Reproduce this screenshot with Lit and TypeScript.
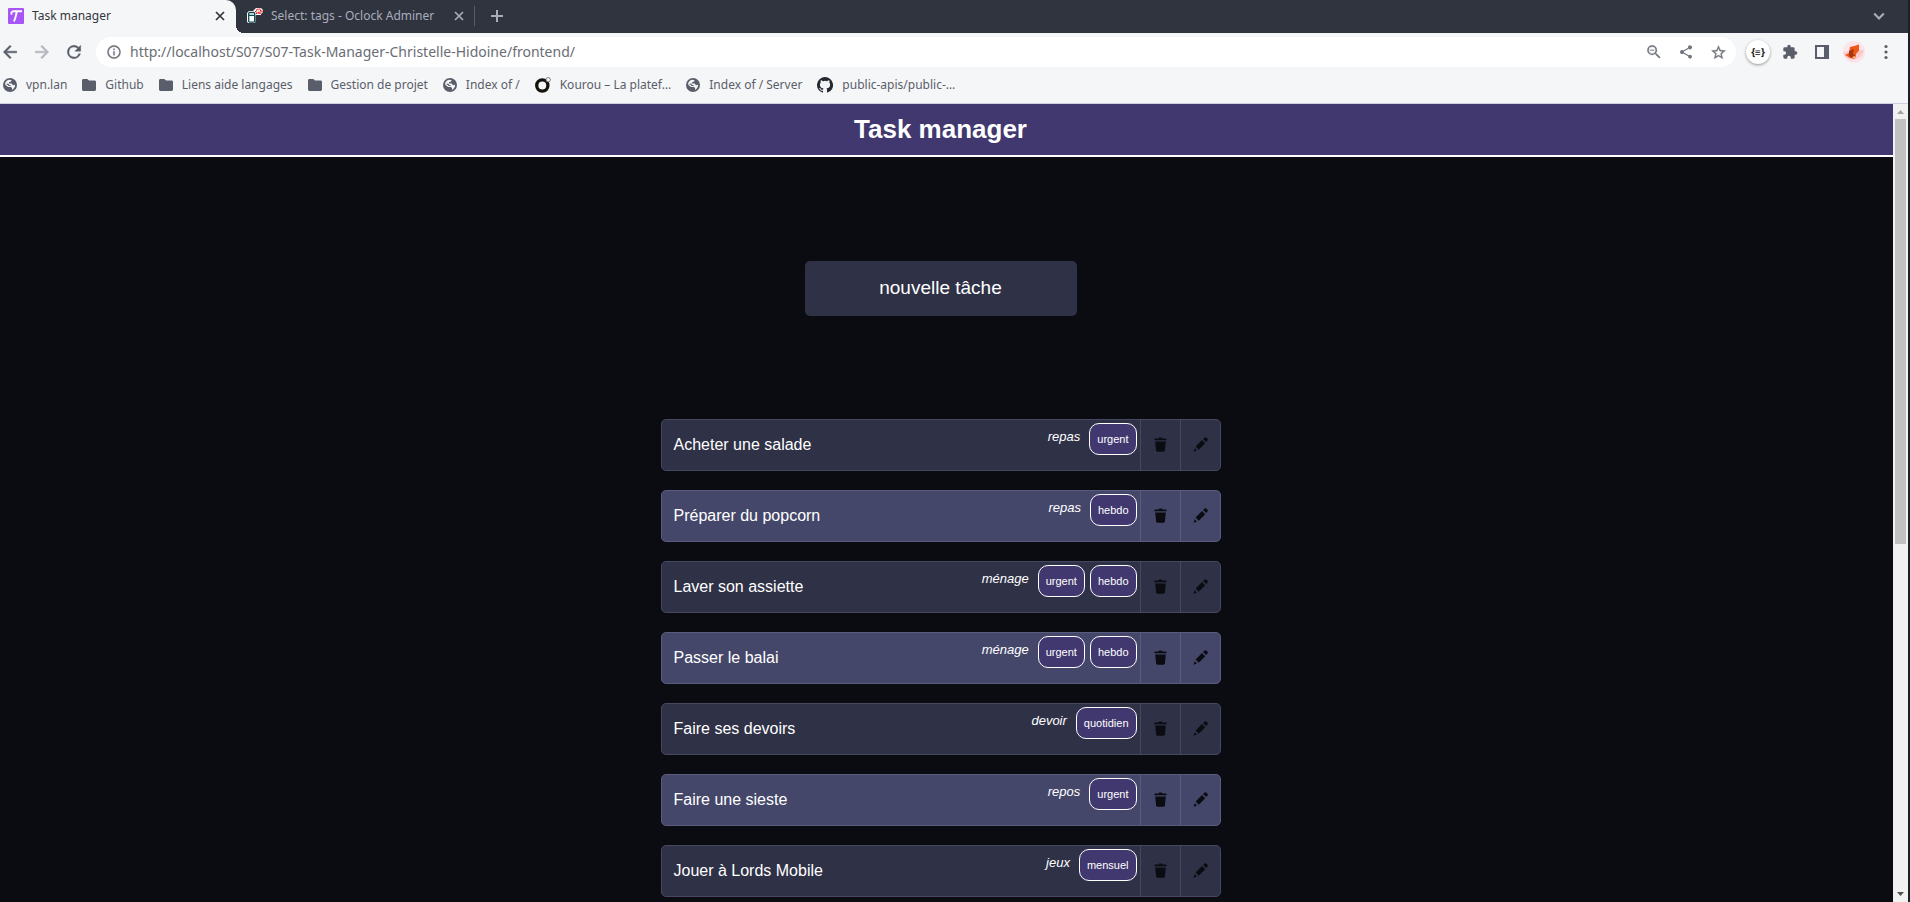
import { LitElement, html, css, svg } from "lit";
import { customElement } from "lit/decorators.js";

interface Task { title: string; category: string; tags: string[]; }

const TASKS: Task[] = [
  { title: "Acheter une salade", category: "repas", tags: ["urgent"] },
  { title: "Préparer du popcorn", category: "repas", tags: ["hebdo"] },
  { title: "Laver son assiette", category: "ménage", tags: ["urgent", "hebdo"] },
  { title: "Passer le balai", category: "ménage", tags: ["urgent", "hebdo"] },
  { title: "Faire ses devoirs", category: "devoir", tags: ["quotidien"] },
  { title: "Faire une sieste", category: "repos", tags: ["urgent"] },
  { title: "Jouer à Lords Mobile", category: "jeux", tags: ["mensuel"] },
];

const icon = (size: number, body: unknown, box = "0 0 24 24") =>
  html`<svg width=${size} height=${size} viewBox=${box} fill="currentColor" aria-hidden="true">${body}</svg>`;

const close = svg`<path d="M1 1l8 8M9 1l-8 8" fill="none" stroke="currentColor" stroke-width="1.7"/>`;
const plus = svg`<path d="M6 0v12M0 6h12" fill="none" stroke="currentColor" stroke-width="2"/>`;
const chevron = svg`<path d="M1 3l4 4 4-4" fill="none" stroke="currentColor" stroke-width="1.8"/>`;
const back = svg`<path d="M20 11H7.83l5.59-5.59L12 4l-8 8 8 8 1.41-1.41L7.83 13H20z" stroke="currentColor" stroke-width=".6"/>`;
const forward = svg`<path d="M12 4l-1.41 1.41L16.17 11H4v2h12.17l-5.58 5.59L12 20l8-8z" stroke="currentColor" stroke-width=".6"/>`;
const reload = svg`<path d="M17.65 6.35A7.96 7.96 0 0 0 12 4a8 8 0 1 0 7.73 10h-2.08A6 6 0 1 1 12 6c1.66 0 3.14.69 4.22 1.78L13 11h7V4z" stroke="currentColor" stroke-width=".5"/>`;
const info = svg`<path d="M11 7h2v2h-2zm0 4h2v6h-2zm1-9a10 10 0 1 0 0 20 10 10 0 0 0 0-20zm0 18a8 8 0 1 1 0-16 8 8 0 0 1 0 16z" stroke="currentColor" stroke-width=".4"/>`;
const zoomOut = svg`<path d="M15.5 14h-.79l-.28-.27A6.47 6.47 0 0 0 16 9.5 6.5 6.5 0 1 0 9.5 16c1.61 0 3.09-.59 4.23-1.57l.27.28v.79l5 4.99L20.49 19zm-6 0a4.5 4.5 0 1 1 0-9 4.5 4.5 0 0 1 0 9zM7 9h5v1H7z" stroke="currentColor" stroke-width=".3"/>`;
const share = svg`<path d="M18 16.08c-.76 0-1.44.3-1.96.77L8.91 12.7a3.3 3.3 0 0 0 0-1.39l7.05-4.11A3 3 0 1 0 15 5c0 .24.04.47.09.7L8.04 9.81a3 3 0 1 0 0 4.38l7.12 4.16a2.92 2.92 0 1 0 2.84-2.27z"/>`;
const star = svg`<path d="M22 9.24l-7.19-.62L12 2 9.19 8.63 2 9.24l5.46 4.73L5.82 21 12 17.27 18.18 21l-1.63-7.03zM12 15.4l-3.76 2.27 1-4.28-3.32-2.88 4.38-.38L12 6.1l1.71 4.04 4.38.38-3.32 2.88 1 4.28z" stroke="currentColor" stroke-width=".4"/>`;
const puzzle = svg`<path d="M20.5 11H19V7a2 2 0 0 0-2-2h-4V3.5a2.5 2.5 0 0 0-5 0V5H4a2 2 0 0 0-2 2v3.8h1.5a2.7 2.7 0 0 1 0 5.4H2V20c0 1.1.9 2 2 2h3.8v-1.5a2.7 2.7 0 0 1 5.4 0V22H17a2 2 0 0 0 2-2v-4h1.5a2.5 2.5 0 0 0 0-5z"/>`;
const panel = svg`<path fill-rule="evenodd" d="M0 0h14v14H0zM2 2v10h7V2z"/>`;
const dots = svg`<circle cx="8" cy="2.5" r="1.6"/><circle cx="8" cy="8" r="1.6"/><circle cx="8" cy="13.5" r="1.6"/>`;
const globe = svg`<circle cx="7" cy="7" r="7"/><path d="M2 6.200C2.300 4 4 2.300 6 1.800l2.600.4-.5 1.400-2 .7v1.300h2.600l1.200 1.700 2.200-.5c.1 2.300-1.200 4.300-3.100 5.100l.1-1.900-1.200-1.100-2.400.2L3.600 8z" fill="#f5f6f7"/><path d="M3.600 6.300l1.500-.2.500 1.100 2 .5" fill="none" stroke="currentColor" stroke-width="1.100"/>`;
const folder = svg`<path d="M0 2.4C0 1.6.6 1 1.4 1h4l1.6 1.6h5.6c.8 0 1.4.6 1.4 1.4v7.6c0 .8-.6 1.4-1.4 1.4H1.4C.6 13 0 12.4 0 11.6z"/>`;
const ring = svg`<circle cx="7.300" cy="8.500" r="5.600" fill="none" stroke="#15120b" stroke-width="3.300"/><circle cx="13.200" cy="2.700" r="2.200" fill="#f5f6f7" stroke="#666" stroke-width=".8"/>`;
const github = svg`<path fill="#24292f" d="M8 0a8 8 0 0 0-2.53 15.59c.4.07.55-.17.55-.38v-1.49c-2.01.37-2.53-.49-2.69-.94-.09-.23-.48-.94-.82-1.13-.28-.15-.68-.52-.01-.53.63-.01 1.08.58 1.23.82.72 1.21 1.87.87 2.33.66.07-.52.28-.87.51-1.07-1.78-.2-3.64-.89-3.64-3.95 0-.87.31-1.59.82-2.15-.08-.2-.36-1.02.08-2.12 0 0 .67-.21 2.2.82a7.5 7.5 0 0 1 4 0c1.53-1.04 2.2-.82 2.2-.82.44 1.1.16 1.92.08 2.12.51.56.82 1.27.82 2.15 0 3.07-1.87 3.75-3.65 3.95.29.25.54.73.54 1.48v2.2c0 .21.15.46.55.38A8 8 0 0 0 8 0z"/>`;
const trash = svg`<path d="M2.500 1.500h3L6.300.4h2.400l.8 1.100h3c.7 0 1.100.4 1.100 1.100v.7H1.400v-.7c0-.7.4-1.100 1.100-1.100zM2.200 4.400h10.600l-.9 9.100c-.1.700-.6 1.200-1.300 1.200H4.400c-.7 0-1.200-.5-1.300-1.200z"/>`;
const pencil = svg`<path d="M11.300.8c.7-.7 1.500-.7 2.200 0l.8.8c.7.700.7 1.500 0 2.200l-1.200 1.200-3-3zM9 3.100l3.200 3.200-6.400 6.400-3.200-3.200zM1.700 11.300l2.200 2.200L.5 14.700z"/>`;

const faviconT = html`<svg width="16" height="16" viewBox="0 0 16 16" aria-hidden="true">
  <rect width="16" height="16" rx="1" fill="#a855f7"/>
  <path d="M3.500 5.800c-.8-1.800.8-2.500 2.500-2.500h7.300M8.800 3.500C8 7 7.600 10 6.200 12.700" fill="none" stroke="#fff" stroke-width="1.900" stroke-linecap="round"/></svg>`;
const faviconDb = html`<svg width="16" height="16" viewBox="0 0 16 16" aria-hidden="true">
  <path d="M1 4l1-1h4l1-1 2-2h5l2 2v2l-2 2v1H9l-.5 1v6l-1 1h-6L0 14V5z" fill="#fff"/>
  <path d="M1.700 5.200l1-.7h4l1 .7v8.300l-1 .7h-4l-1-.7zM2 7.300h5.500" fill="#fff" stroke="#0c4a52" stroke-width="1.300"/>
  <path d="M8 3.500h1.500V2H11V1h2.500v1.500H15V4h-1.500v1.500H12V4h-1v1.500H9.500V4" fill="none" stroke="#e11212" stroke-width="1.100" stroke-dasharray="1.400 .8"/></svg>`;
const avatar = html`<svg width="22" height="22" viewBox="0 0 22 22" aria-hidden="true">
  <circle cx="11" cy="11" r="11" fill="#fde3ea"/><path d="M0 12l6-2 15-1a11 11 0 0 1-21 3z" fill="#ffc9c9"/>
  <path d="M7 6l4-1 5-1.500v6L13 13l-1 5-5-1-5-3 4-2z" fill="#ee5a1c"/><path d="M6 10l5-2-1 5 3 2-4 2-3-2z" fill="#a83410"/><path d="M9 16l3-1v3z" fill="#f5c27a"/></svg>`;

const BOOKMARKS = [
  { label: "vpn.lan", icon: icon(14, globe, "0 0 14 14") },
  { label: "Github", icon: icon(14, folder, "0 0 14 14") },
  { label: "Liens aide langages", icon: icon(14, folder, "0 0 14 14") },
  { label: "Gestion de projet", icon: icon(14, folder, "0 0 14 14") },
  { label: "Index of /", icon: icon(14, globe, "0 0 14 14") },
  { label: "Kourou – La platef…", icon: icon(16, ring, "0 0 16 16") },
  { label: "Index of / Server", icon: icon(14, globe, "0 0 14 14") },
  { label: "public-apis/public-…", icon: icon(16, github, "0 0 16 16") },
];

const base = css`
  * { box-sizing: border-box; }
  button { border: 0; padding: 0; background: none; color: inherit; font: inherit; display: grid; place-items: center; cursor: pointer; }
  svg { display: block; flex: none; }
`;

@customElement("browser-chrome")
class BrowserChrome extends LitElement {
  static styles = [base, css`
    :host { display: block; flex: none; font: 12px/18px "Noto Sans", sans-serif; color: #5a5e6b; background: #f5f6f7; border-bottom: 1px solid #ccd0e0; }
    .tabs { display: flex; height: 33px; background: #2f343f; color: #a9adbb; }
    .tab { display: flex; align-items: center; gap: 8px; height: 33px; padding-bottom: 2px; }
    .name { flex: 1; white-space: nowrap; }
    .active { width: 236px; padding-left: 8px; padding-right: 11px; background: #f5f6f7; color: #32353d; border-top-right-radius: 10px; }
    .flare { align-self: flex-end; width: 8px; height: 8px; background: radial-gradient(circle at 100% 0, transparent 8px, #f5f6f7 8px); }
    .idle { width: 230px; padding-left: 3px; padding-right: 10px; }
    .rule { width: 1px; height: 20px; margin-top: 6px; background: #565b68; }
    .close { width: 10px; height: 18px; }
    .new { width: 44px; padding-bottom: 2px; }
    .list { margin-left: auto; width: 58px; padding-bottom: 2px; }
    .bar { display: flex; align-items: center; height: 38px; padding-right: 6px; }
    .nav { width: 32px; height: 32px; }
    .nav:first-child { width: 26px; padding-right: 6px; }
    .muted { color: #b3b6bd; }
    .address { flex: 1; display: flex; align-items: center; height: 30px; margin: 0 6px; padding: 0 2px 0 10px; border-radius: 15px; background: #fff; }
    .address button { width: 32px; color: #72757e; }
    .address .site { width: 16px; }
    .url { flex: 1; border: 0; padding: 0 0 0 8px; background: none; color: #6a6d75; font: 14px/20px "Noto Sans", sans-serif; outline: 0; }
    .ext { width: 24px; height: 24px; margin: 0 4px; border-radius: 50%; background: #fff; color: #111; box-shadow: 0 1px 3px #0006; font: bold 10px/24px "Noto Sans", sans-serif; }
    .marks { display: flex; align-items: center; gap: 15px; height: 32px; padding: 0 0 4px 3px; }
    .mark { display: flex; align-items: center; gap: 9px; color: inherit; text-decoration: none; white-space: nowrap; }
  `];
  render() {
    return html`
      <div class="tabs">
        <div class="tab active">${faviconT}<span class="name">Task manager</span><button class="close" aria-label="Fermer">${icon(10, close, "0 0 10 10")}</button></div>
        <span class="flare"></span>
        <div class="tab idle">${faviconDb}<span class="name">Select: tags - Oclock Adminer</span><button class="close" aria-label="Fermer">${icon(10, close, "0 0 10 10")}</button></div>
        <span class="rule"></span>
        <button class="new" aria-label="Nouvel onglet">${icon(12, plus, "0 0 12 12")}</button>
        <button class="list" aria-label="Onglets">${icon(12, chevron, "0 0 10 10")}</button>
      </div>
      <div class="bar">
        <button class="nav" aria-label="Retour">${icon(20, back)}</button>
        <button class="nav muted" aria-label="Avancer">${icon(20, forward)}</button>
        <button class="nav" aria-label="Actualiser">${icon(20, reload)}</button>
        <div class="address">
          <button class="site" aria-label="Informations">${icon(16, info)}</button>
          <input class="url" aria-label="Adresse" value="http://localhost/S07/S07-Task-Manager-Christelle-Hidoine/frontend/">
          <button aria-label="Zoom">${icon(18, zoomOut)}</button>
          <button aria-label="Partager">${icon(16, share)}</button>
          <button aria-label="Favori">${icon(17, star)}</button>
        </div>
        <button class="ext" aria-label="JSON">{≡}</button>
        <button class="nav" aria-label="Extensions">${icon(16, puzzle)}</button>
        <button class="nav" aria-label="Panneau">${icon(14, panel, "0 0 14 14")}</button>
        <button class="nav" aria-label="Profil">${avatar}</button>
        <button class="nav" aria-label="Menu">${icon(16, dots, "0 0 16 16")}</button>
      </div>
      <nav class="marks">${BOOKMARKS.map((b) => html`<a class="mark" href="#">${b.icon}${b.label}</a>`)}</nav>`;
  }
}

@customElement("task-item")
class TaskItem extends LitElement {
  static properties = { task: { attribute: false } };
  declare task: Task;
  static styles = [base, css`
    :host { display: flex; height: 52px; border: 1px solid #464860; border-radius: 5px; background: #2f3147; color: #fff; }
    :host(:nth-child(even)) { background: #45476a; border-color: #5a5c7d; }
    .title { flex: 1; margin: 0; padding-left: 12px; font: 16px/50px "Liberation Sans", Arial, sans-serif; }
    .category { margin: 0 9px 0 0; font: italic 13px/34px "Liberation Sans", Arial, sans-serif; }
    .tags { display: flex; align-items: flex-start; gap: 5px; margin: 0; padding: 3px 3px 0 0; list-style: none; }
    .tag { padding: 0 7px; border: 1px solid #fff; border-radius: 10px; background: #41386f; font: 11px/30px "Liberation Sans", Arial, sans-serif; }
    .action { width: 40px; padding-bottom: 2px; border-left: 1px solid #464860; color: #0b0c11; }
    :host(:nth-child(even)) .action { border-color: #5a5c7d; }
  `];
  render() {
    const t = this.task;
    return html`<p class="title">${t.title}</p><em class="category">${t.category}</em>
      <ul class="tags">${t.tags.map((x) => html`<li class="tag">${x}</li>`)}</ul>
      <button class="action" aria-label="Supprimer">${icon(15, trash, "0 0 15 15")}</button>
      <button class="action" aria-label="Modifier">${icon(15, pencil, "0 0 15 15")}</button>`;
  }
}

@customElement("app-root")
class AppRoot extends LitElement {
  static styles = [base, css`
    :host { display: flex; flex-direction: column; height: 100vh; overflow: hidden; border-right: 2px solid #1d2029; background: #0b0c11; }
    .view { flex: 1; min-height: 0; display: flex; }
    .page { flex: 1; overflow: hidden; font-family: "Liberation Sans", Arial, sans-serif; color: #fff; }
    .header { padding-right: 12px; border-bottom: 2px solid #fff; background: #41386f; }
    .heading { margin: 0; font-size: 26px; line-height: 51px; text-align: center; }
    .content { display: grid; justify-content: center; justify-items: center; gap: 103px; padding: 104px 12px 0 0; }
    .create { width: 272px; height: 55px; padding-bottom: 2px; border-radius: 5px; background: #2f3147; font-size: 19px; }
    .list { display: grid; gap: 19px; width: 560px; }
    .scroll { display: flex; flex-direction: column; align-items: center; gap: 5px; width: 15px; padding: 6px 0; background: #f1f1f1; }
    .thumb { flex: 425; width: 11px; background: #c1c1c1; }
    .track { flex: 338; }
    .up { color: #a3a3a3; }
    .down { color: #505050; }
  `];
  render() {
    return html`<browser-chrome></browser-chrome>
      <div class="view">
        <main class="page">
          <header class="header"><h1 class="heading">Task manager</h1></header>
          <div class="content">
            <button class="create">nouvelle tâche</button>
            <section class="list">${TASKS.map((t) => html`<task-item .task=${t}></task-item>`)}</section>
          </div>
        </main>
        <div class="scroll">
          <svg class="up" width="7" height="4" viewBox="0 0 7 4"><path d="M0 4L3.500 0 7 4z" fill="currentColor"/></svg>
          <span class="thumb"></span>
          <span class="track"></span>
          <svg class="down" width="7" height="4" viewBox="0 0 7 4"><path d="M0 0h7L3.500 4z" fill="currentColor"/></svg>
        </div>
      </div>`;
  }
}
